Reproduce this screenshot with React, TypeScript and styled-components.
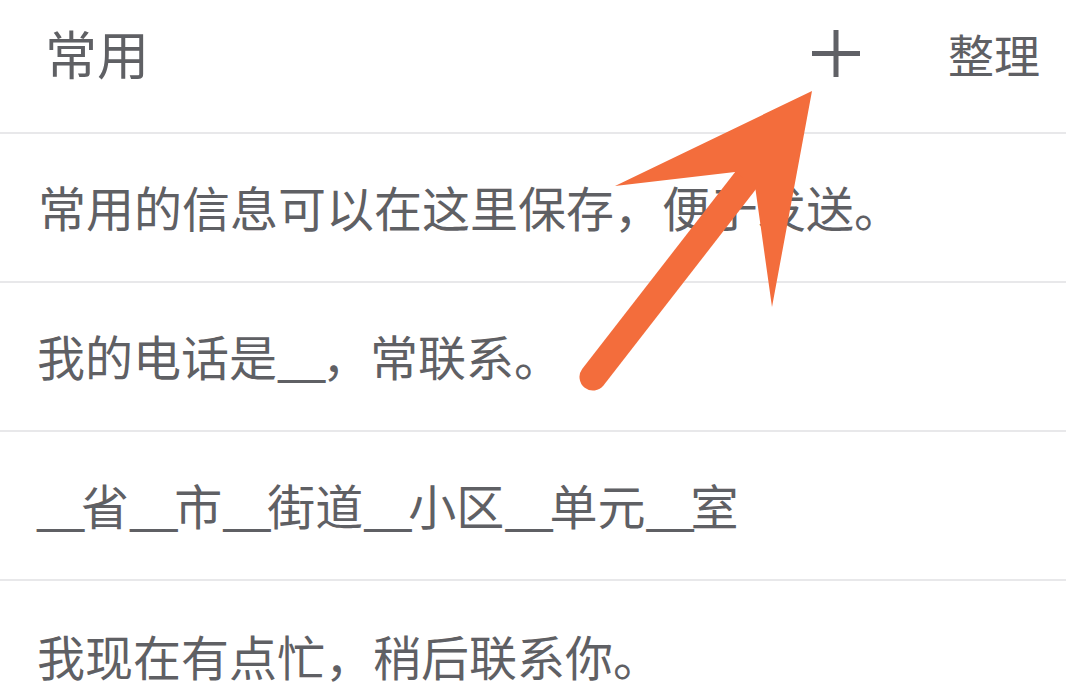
import React from "react";
import styled, { createGlobalStyle } from "styled-components";

const GlobalStyle = createGlobalStyle`
  html, body { margin: 0; padding: 0; background: #ffffff; }
  body { font-family: "Noto Sans CJK SC", "Noto Sans", sans-serif; }
  * { box-sizing: border-box; }
`;

const Page = styled.div`
  position: relative;
  width: 1066px;
  height: 685px;
  overflow: hidden;
  background: #ffffff;
  color: #5f6064;
`;

const Header = styled.header`
  display: flex;
  align-items: center;
  height: 134px;
  padding: 0 26px 26px 45px;
  border-bottom: 2px solid #e8e8ea;
`;

const Title = styled.h1`
  margin: 0;
  flex: 1;
  font-size: 52px;
  font-weight: 400;
  line-height: 1;
  color: #5f6064;
`;

const Actions = styled.div`
  display: flex;
  align-items: center;
  gap: 88px;
`;

const IconButton = styled.button`
  display: flex;
  align-items: center;
  justify-content: center;
  width: 48px;
  height: 48px;
  padding: 0;
  border: none;
  background: none;
  margin-top: 2px;
`;

const TextButton = styled.button`
  padding: 0;
  border: none;
  background: none;
  font-family: "Noto Sans CJK SC", "Noto Sans", sans-serif;
  font-size: 46px;
  line-height: 1;
  color: #5f6064;
`;

const List = styled.ul`
  margin: 0;
  padding: 0;
  list-style: none;
`;

const Row = styled.li<{ $indent: number }>`
  display: flex;
  align-items: center;
  height: 149px;
  padding: 0 0 4px ${(p) => p.$indent}px;
  border-bottom: 2px solid #e8e8ea;
  font-size: 48px;
  line-height: 1;
  color: #5f6064;
  white-space: nowrap;

  &:last-child {
    height: 102px;
    align-items: flex-start;
    padding-top: 50px;
    border-bottom: none;
  }
`;

const Blank = styled.span`
  letter-spacing: -4.3px;
`;

const Overlay = styled.svg`
  position: absolute;
  left: 0;
  top: 0;
  pointer-events: none;
`;

const phrases: { text: string; indent: number }[] = [
  { text: "常用的信息可以在这里保存，便于发送。", indent: 38 },
  { text: "我的电话是__，常联系。", indent: 37 },
  { text: "__省__市__街道__小区__单元__室", indent: 36 },
  { text: "我现在有点忙，稍后联系你。", indent: 37 },
];

function renderPhrase(text: string) {
  return text.split(/(__)/).map((part, i) =>
    part === "__" ? <Blank key={i}>__</Blank> : <React.Fragment key={i}>{part}</React.Fragment>
  );
}

export default function App() {
  return (
    <>
      <GlobalStyle />
      <Page>
        <Header>
          <Title>常用</Title>
          <Actions>
            <IconButton aria-label="添加">
              <svg width="48" height="48" viewBox="0 0 48 48">
                <path d="M24 0 V47 M0 23.5 H48" stroke="#606166" strokeWidth="5" fill="none" />
              </svg>
            </IconButton>
            <TextButton>整理</TextButton>
          </Actions>
        </Header>
        <List>
          {phrases.map((p) => (
            <Row key={p.text} $indent={p.indent}>
              <span>{renderPhrase(p.text)}</span>
            </Row>
          ))}
        </List>
        <Overlay width="1066" height="685" viewBox="0 0 1066 685">
          <line
            x1="593"
            y1="377"
            x2="746"
            y2="180"
            stroke="#f36d3c"
            strokeWidth="27"
            strokeLinecap="round"
          />
          <polygon
            points="812,91 615,186 735,172 743,178 755,186 772,307"
            fill="#f36d3c"
          />
        </Overlay>
      </Page>
    </>
  );
}
